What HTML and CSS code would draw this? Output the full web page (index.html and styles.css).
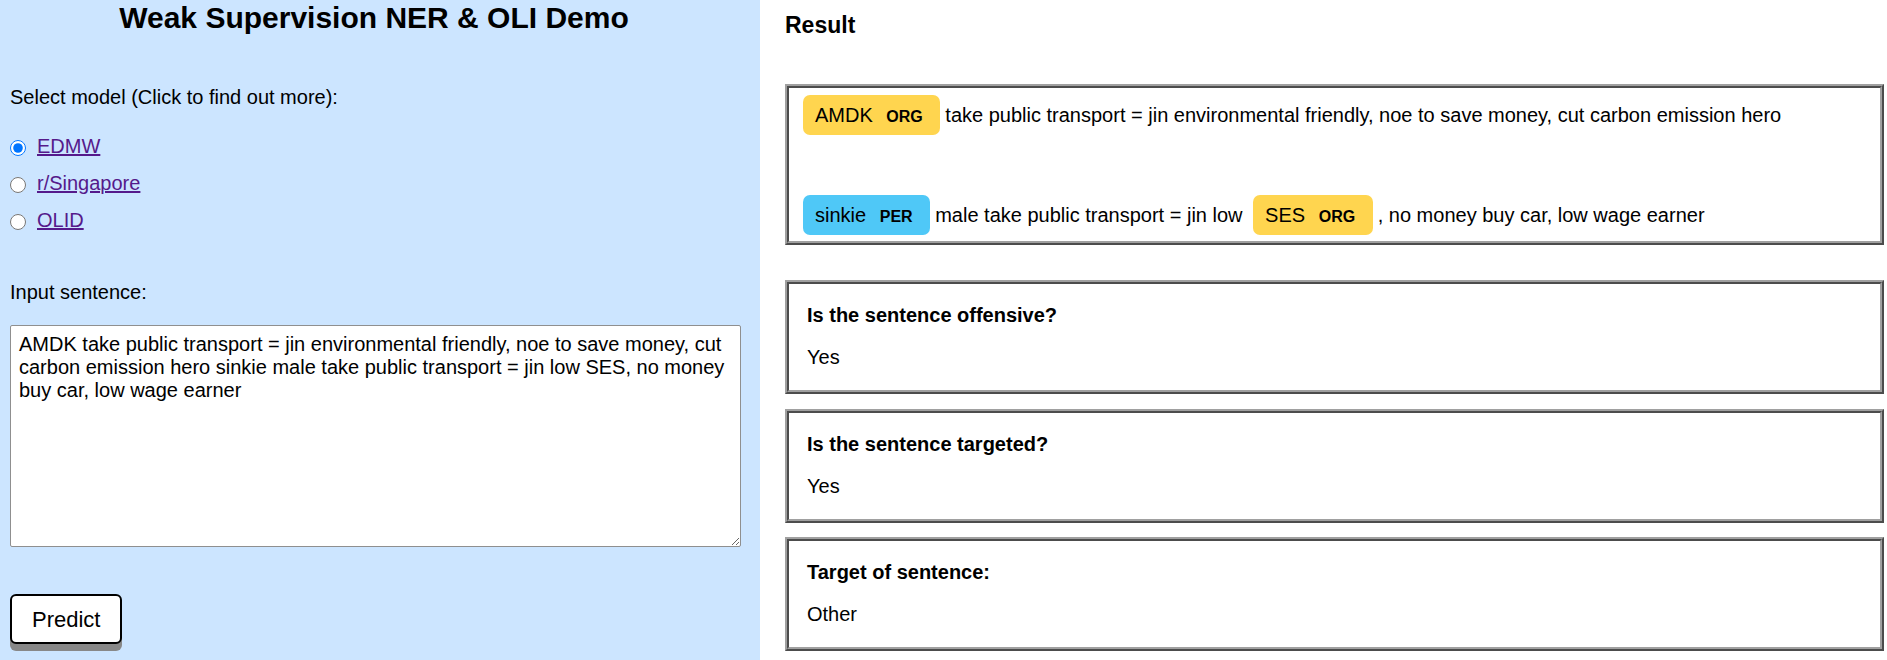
FILE: index.html
```html
<!DOCTYPE html>
<html lang="en">
<head>
<meta charset="utf-8">
<title>Weak Supervision NER &amp; OLI Demo</title>
<link rel="stylesheet" href="styles.css">
</head>
<body>
<div class="page">
  <section class="left">
    <h2 class="title">Weak Supervision NER &amp; OLI Demo</h2>
    <p class="field-label select-label">Select model (Click to find out more):</p>
    <div class="models">
      <label class="model"><input type="radio" name="model" checked><a href="#edmw">EDMW</a></label>
      <label class="model"><input type="radio" name="model"><a href="#rsg">r/Singapore</a></label>
      <label class="model"><input type="radio" name="model"><a href="#olid">OLID</a></label>
    </div>
    <p class="field-label input-label">Input sentence:</p>
    <textarea class="sentence">AMDK take public transport = jin environmental friendly, noe to save money, cut carbon emission hero sinkie male take public transport = jin low SES, no money buy car, low wage earner</textarea>
    <button class="predict" type="button">Predict</button>
  </section>
  <section class="right">
    <h3 class="result-title">Result</h3>
    <div class="box ents"><mark class="entity org">AMDK <span class="entity-label">ORG</span> </mark> take public transport = jin environmental friendly, noe to save money, cut carbon emission hero<br><br><mark class="entity per">sinkie <span class="entity-label">PER</span> </mark> male take public transport = jin low <mark class="entity org">SES <span class="entity-label">ORG</span> </mark>, no money buy car, low wage earner</div>
    <div class="box card">
      <h4 class="card-title">Is the sentence offensive?</h4>
      <p class="card-value">Yes</p>
    </div>
    <div class="box card">
      <h4 class="card-title">Is the sentence targeted?</h4>
      <p class="card-value">Yes</p>
    </div>
    <div class="box card">
      <h4 class="card-title">Target of sentence:</h4>
      <p class="card-value">Other</p>
    </div>
  </section>
</div>
</body>
</html>
```
FILE: styles.css
```css
* { box-sizing: border-box; }
html, body { margin: 0; padding: 0; }
body {
  font-family: "Liberation Sans", Arial, sans-serif;
  font-size: 20px;
  color: #000;
  background: #fff;
}
.page {
  display: flex;
  height: 660px;
  overflow: hidden;
}
.left {
  width: 760px;
  flex: none;
  background: #cce5ff;
  padding: 0 10px;
  display: flex;
  flex-direction: column;
  align-items: flex-start;
}
.title {
  align-self: stretch;
  text-align: center;
  font-size: 30px;
  font-weight: bold;
  margin: 1px 12px 0 0;
}
.field-label {
  margin: 0;
  line-height: 23px;
}
.select-label { margin-top: 51px; }
.models {
  display: flex;
  flex-direction: column;
  margin-top: 19px;
}
.model {
  display: block;
  line-height: 37px;
}
.model input {
  width: 16px;
  height: 16px;
  margin: 0 11px 0 0;
  vertical-align: middle;
}
.model a {
  color: #551a8b;
  text-decoration: underline;
}
.input-label { margin-top: 42px; }
.sentence {
  width: 731px;
  height: 222px;
  margin-top: 21px;
  padding: 7px 6px 7px 8px;
  border: 1px solid #8f8f8f;
  border-radius: 2px;
  font-family: "Liberation Sans", Arial, sans-serif;
  font-size: 20px;
  line-height: 23px;
  color: #000;
  background: #fff;
  resize: both;
}
.predict {
  margin-top: 47px;
  padding: 11px 20px 10px;
  border: 2px solid #000;
  border-radius: 6px;
  background: #fff;
  color: #000;
  font-family: "Liberation Sans", Arial, sans-serif;
  font-size: 22px;
  line-height: 25px;
  box-shadow: 0 7px 0 #888;
}
.right {
  flex: 1;
  padding: 0 3px 0 25px;
}
.result-title {
  font-size: 23px;
  font-weight: bold;
  margin: 12px 0 0;
}
.box {
  border: 4px ridge #a0a0a0;
  background: #fff;
}
.ents {
  margin-top: 45px;
  padding: 2px 9px 1px;
  font-size: 20px;
  line-height: 50px;
}
.entity {
  color: #000;
  padding: 0.45em 0.6em;
  margin: 0 0.25em;
  line-height: 1;
  border-radius: 0.35em;
}
.entity.org { background: #ffd54f; }
.entity.per { background: #4fc8f7; }
.entity-label {
  font-size: 0.8em;
  font-weight: bold;
  line-height: 1;
  border-radius: 0.35em;
  vertical-align: middle;
  margin-left: 8px;
}
.card {
  height: 114px;
  margin-top: 14.5px;
  padding: 20px 18px 21px;
}
.ents + .card { margin-top: 35px; }
.card-title {
  margin: 0;
  font-size: 20px;
  font-weight: bold;
  line-height: 23px;
}
.card-value {
  margin: 19px 0 0;
  line-height: 23px;
}
```
